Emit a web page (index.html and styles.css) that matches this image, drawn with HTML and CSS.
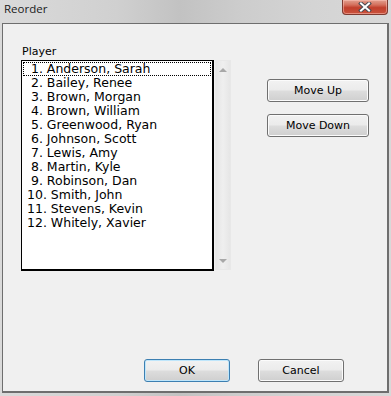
FILE: index.html
```
<!DOCTYPE html>
<html lang="en">
<head>
    <meta charset="UTF-8">
    <title>Reorder</title>
    <link rel="stylesheet" href="styles.css">
</head>
<body>
    <div class="window">
        <div class="titlebar">
            <span class="title">Reorder</span>
            <div class="close-btn">
                <svg width="14" height="10" viewBox="0 0 14 10">
                    <path d="M3 1.5 L11 8.5 M11 1.5 L3 8.5" stroke="#4a4a52" stroke-width="4" stroke-linecap="square"/>
                    <path d="M3 1.5 L11 8.5 M11 1.5 L3 8.5" stroke="#ffffff" stroke-width="2" stroke-linecap="square"/>
                </svg>
            </div>
        </div>

        <div class="client">
            <div class="main-row">
                <div class="list-col">
                    <label class="list-label">Player</label>
                    <div class="list-wrap">
                        <ul class="listbox">
                            <li class="item focused"> 1. Anderson, Sarah</li>
                            <li class="item"> 2. Bailey, Renee</li>
                            <li class="item"> 3. Brown, Morgan</li>
                            <li class="item"> 4. Brown, William</li>
                            <li class="item"> 5. Greenwood, Ryan</li>
                            <li class="item"> 6. Johnson, Scott</li>
                            <li class="item"> 7. Lewis, Amy</li>
                            <li class="item"> 8. Martin, Kyle</li>
                            <li class="item"> 9. Robinson, Dan</li>
                            <li class="item">10. Smith, John</li>
                            <li class="item">11. Stevens, Kevin</li>
                            <li class="item">12. Whitely, Xavier</li>
                        </ul>
                        <div class="scrollbar">
                            <svg width="8" height="5" viewBox="0 0 8 5"><path d="M0 5 L4 1 L8 5 Z" fill="#a8a8a8"/></svg>
                            <svg width="8" height="5" viewBox="0 0 8 5"><path d="M0 0 L4 4 L8 0 Z" fill="#a8a8a8"/></svg>
                        </div>
                    </div>
                </div>

                <div class="side-buttons">
                    <button class="btn side-btn">Move Up</button>
                    <button class="btn side-btn">Move Down</button>
                </div>
            </div>

            <div class="footer">
                <button class="btn footer-btn default">OK</button>
                <button class="btn footer-btn">Cancel</button>
            </div>
        </div>
    </div>
</body>
</html>
```
FILE: styles.css
```
body {
    margin: 0;
    width: 391px;
    height: 396px;
    overflow: hidden;
    background: #d6d6d6;
    font-family: "DejaVu Sans", Verdana, sans-serif;
    font-size: 11px;
    color: #000000;
}

.window {
    width: 391px;
    height: 396px;
    display: flex;
    flex-direction: column;
    background: linear-gradient(90deg, #dadada 0%, #d0d0d0 30%, #c2c2c2 46%, #cdcdcd 62%, #d4d4d4 80%, #d8d8d8 100%);
}

.titlebar {
    height: 23px;
    display: flex;
    justify-content: space-between;
    align-items: flex-start;
    padding-left: 4px;
    padding-right: 3px;
}

.title {
    font-family: "Open Sans", sans-serif;
    font-size: 11.5px;
    line-height: 16px;
    color: #1a1a1a;
    margin-top: 1px;
}

.close-btn {
    width: 44px;
    height: 14px;
    border: 1px solid #7e3a30;
    border-top: none;
    border-radius: 0 0 4px 4px;
    background: linear-gradient(#e2a08f 0%, #d4705d 35%, #c13f2c 55%, #c9523c 100%);
    box-shadow: inset 0 0 0 1px rgba(255, 200, 190, 0.5);
    display: flex;
    justify-content: center;
    align-items: center;
}

.client {
    flex: 1;
    margin: 0 2px 3px 2px;
    border: 1px solid #6e6e6e;
    border-right-width: 2px;
    border-bottom-width: 2px;
    background: #f0f0f0;
    display: flex;
    flex-direction: column;
    padding: 21px 43px 9px 18px;
}

.main-row {
    display: flex;
    align-items: flex-start;
}

.list-col {
    display: flex;
    flex-direction: column;
}

.list-label {
    line-height: 13px;
    padding-left: 1px;
    margin-bottom: 2px;
}

.list-wrap {
    display: flex;
    gap: 1px;
}

.listbox {
    list-style: none;
    margin: 0;
    padding: 1px 0 0 0;
    width: 190px;
    height: 207px;
    background: #ffffff;
    border: 1px solid #000000;
    border-right-width: 2px;
    border-bottom-width: 2px;
    font-size: 12.5px;
}

.item {
    white-space: pre;
    line-height: 14px;
    height: 14px;
    padding-left: 4px;
    margin: 0 1px;
    box-sizing: border-box;
}

.item.focused {
    outline: 1px dotted #000000;
    outline-offset: -1px;
}

.scrollbar {
    width: 16px;
    height: 210px;
    box-sizing: border-box;
    background: linear-gradient(90deg, #e6e6e6, #efefef 50%, #e6e6e6);
    border: 1px solid #e8e8e8;
    display: flex;
    flex-direction: column;
    justify-content: space-between;
    align-items: center;
    padding: 6px 0 5px 0;
}

.side-buttons {
    display: flex;
    flex-direction: column;
    gap: 12px;
    margin-left: 36px;
    margin-top: 34px;
}

.btn {
    font-family: "DejaVu Sans", Verdana, sans-serif;
    font-size: 11px;
    color: #000000;
    height: 23px;
    padding: 0;
    border: 1px solid #707070;
    border-radius: 3px;
    background: linear-gradient(#f2f2f2 0%, #ebebeb 48%, #dddddd 52%, #cfcfcf 100%);
    box-shadow: inset 0 0 0 1px #fbfbfb;
}

.side-btn {
    width: 102px;
}

.footer {
    margin-top: auto;
    display: flex;
    justify-content: flex-end;
    gap: 28px;
}

.footer-btn {
    width: 86px;
}

.btn.default {
    border-color: #3c7fb1;
    box-shadow: inset 0 0 0 1px #bfe6fb;
}
```
